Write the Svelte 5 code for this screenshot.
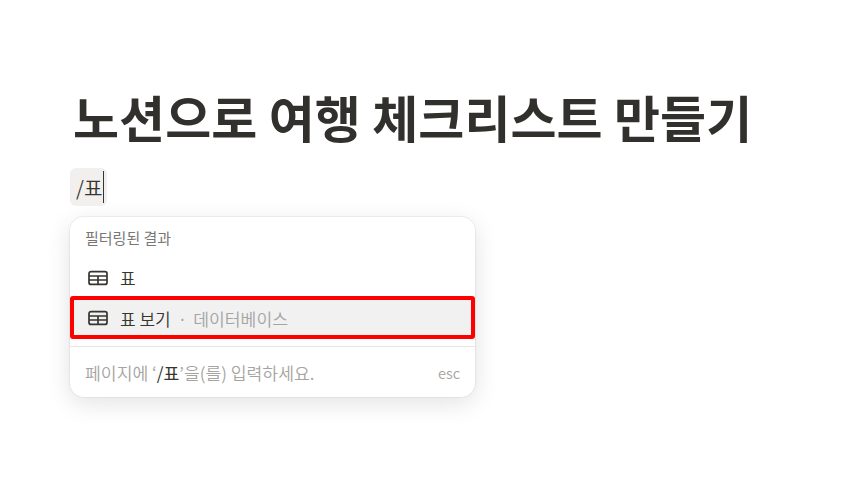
<script lang="ts">
	const query = '/표';
</script>

<main class="page">
	<h1>노션으로 여행 체크리스트 만들기</h1>

	<div class="block">
		<span class="typed">{query}<span class="caret"></span></span>
	</div>

	<section class="menu">
		<div class="menu-title">필터링된 결과</div>

		<div class="row">
			<svg class="icon" viewBox="0 0 20 16" width="20" height="16" aria-hidden="true">
				<rect x="1" y="1.6" width="18" height="12.8" rx="2" />
				<path d="M1 6h18M1 10h18M10 6v8.4" />
			</svg>
			<span class="name">표</span>
		</div>

		<div class="row selected">
			<svg class="icon" viewBox="0 0 20 16" width="20" height="16" aria-hidden="true">
				<rect x="1" y="1.6" width="18" height="12.8" rx="2" />
				<path d="M1 6h18M1 10h18M10 6v8.4" />
			</svg>
			<span class="name">표 보기</span>
			<span class="dot">·</span>
			<span class="kind">데이터베이스</span>
		</div>

		<div class="menu-footer">
			<span>페이지에 ‘<b>/표</b>’을(를) 입력하세요.</span>
			<span class="esc">esc</span>
		</div>
	</section>
</main>

<style>
	:global(body) {
		margin: 0;
		background: #ffffff;
	}

	.page {
		height: 485px;
		box-sizing: border-box;
		padding: 83px 0 0 70px;
		overflow: hidden;
		font-family: 'Noto Sans CJK KR', 'Liberation Sans', sans-serif;
		font-weight: 350;
		color: #37352f;
	}

	h1 {
		margin: 0 0 0 3px;
		font-size: 50px;
		line-height: 67px;
		font-weight: 700;
		letter-spacing: 0.07px;
		white-space: nowrap;
		color: #32302c;
	}

	.block {
		margin-top: 18px;
		height: 38px;
	}

	.typed {
		display: inline-flex;
		align-items: center;
		height: 38px;
		width: 37px;
		padding: 0 0 0 6px;
		box-sizing: border-box;
		border-radius: 6px;
		background: #f1f0ee;
		font-size: 20.2px;
	}

	.caret {
		width: 1px;
		height: 32px;
		background: #37352f;
	}

	.menu {
		box-sizing: border-box;
		width: 405px;
		height: 180px;
		margin-top: 11px;
		border-radius: 14px;
		background: #ffffff;
		box-shadow: 0 0 0 1px rgba(15, 15, 15, 0.05), 0 6px 24px rgba(15, 15, 15, 0.12);
	}

	.menu-title {
		height: 42px;
		padding: 11px 0 0 15px;
		box-sizing: border-box;
		font-size: 15px;
		line-height: 20px;
		font-weight: 400;
		color: #787774;
	}

	.row {
		display: flex;
		align-items: center;
		box-sizing: border-box;
		height: 37px;
		padding: 0 14px 0 18px;
		font-size: 17px;
	}

	.row.selected {
		height: 43px;
		padding-left: 14px;
		padding-top: 1px;
		border: 4px solid #fe0000;
		border-radius: 3px;
		background: #f1f1f1;
	}

	.icon {
		flex: none;
		margin-right: 12px;
		fill: none;
		stroke: #37352f;
		stroke-width: 1.7;
	}

	.row.selected .icon {
		margin-top: -1px;
	}

	.dot {
		margin: 0 6px 0 7px;
		color: #a5a4a1;
	}

	.kind {
		font-size: 17.2px;
		color: #a5a4a1;
	}

	.menu-footer {
		display: flex;
		justify-content: space-between;
		align-items: center;
		box-sizing: border-box;
		height: 51px;
		margin-top: 7px;
		padding: 0 15px 0 15px;
		border-top: 1px solid #e6e6e5;
		font-size: 17.2px;
		color: #a5a4a1;
	}

	.menu-footer b {
		font-weight: 400;
		color: #37352f;
	}

	.esc {
		font-size: 14.5px;
	}
</style>
